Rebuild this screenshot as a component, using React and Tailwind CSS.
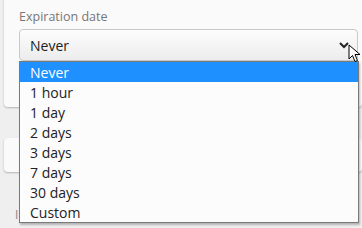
export default function App() {
  const items = ["Never", "1 hour", "1 day", "2 days", "3 days", "7 days", "30 days", "Custom"];
  return (
    <div className="relative w-[362px] h-[228px] overflow-hidden bg-[#efefef]" style={{ fontFamily: '"Open Sans", sans-serif' }}>
      <div className="flex flex-col pl-[4px] -mt-[10px]">
        <div className="h-[117px] bg-[#fafafa] rounded-[4px] shadow-[0_1px_2px_rgba(0,0,0,0.25)] pl-[15px] pr-[4px] pt-[18px]">
          <div className="text-[12.5px] text-[#777] leading-[18px]">Expiration date</div>
          <div className="mt-[3px] h-[32px] rounded-[4px] border border-[#c8c8c8] bg-gradient-to-b from-[#fdfdfd] to-[#ececec] flex items-center justify-between pl-[10px] pr-[6px]">
            <span className="text-[14px] text-[#222]">Never</span>
            <svg width="12" height="8" viewBox="0 0 12 8" className="mr-[1px]">
              <path d="M2 2 L6 6 L10 2" stroke="#222" strokeWidth="2" fill="none" />
            </svg>
          </div>
        </div>
        <div className="mt-[31px] h-[34px] bg-[#fafafa] rounded-[4px] shadow-[0_1px_2px_rgba(0,0,0,0.25)]" />
        <div className="mt-[36px] pl-[11px] text-[12px] text-[#888] leading-[14px]">I</div>
      </div>
      <div className="absolute left-[19px] top-[61px] w-[340px] bg-[#fcfcfc] border border-[#7a7a7a] shadow-[1px_2px_2px_rgba(0,0,0,0.25)]">
        {items.map((t, i) => (
          <div key={t} className={`h-[20px] pl-[10px] pt-[1px] text-[14px] leading-[20px] overflow-hidden ${i === 0 ? "bg-[#1e90ff] text-white" : "text-[#222]"}`}>{t}</div>
        ))}
      </div>
      <svg className="absolute left-[348px] top-[44px]" width="14" height="20" viewBox="0 0 14 20">
        <path d="M1 1 L1 15 L4.5 11.5 L7 17.5 L9.5 16.5 L7 10.5 L12 10.5 Z" fill="#fff" stroke="#000" strokeWidth="1" strokeLinejoin="round" />
      </svg>
    </div>
  );
}
